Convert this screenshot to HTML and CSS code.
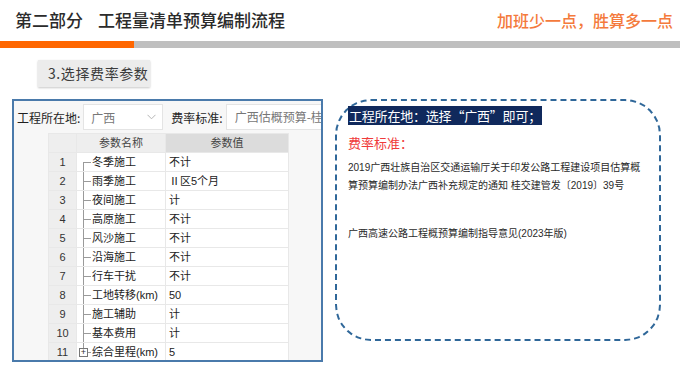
FILE: index.html
```html
<!DOCTYPE html>
<html lang="zh-CN">
<head>
    <meta charset="UTF-8">
    <title>工程量清单预算编制流程</title>
    <link rel="stylesheet" href="styles.css">
</head>
<body>
    <div class="header">
        <h1 class="title"><span class="part">第二部分</span>工程量清单预算编制流程</h1>
        <div class="slogan">加班少一点，胜算多一点</div>
    </div>
    <div class="bar">
        <div class="bar-orange"></div>
        <div class="bar-grey"></div>
    </div>

    <div class="main">
        <div class="left-col">
            <div class="step-tag">3.选择费率参数</div>

            <div class="panel">
                <div class="toolbar">
                    <span class="tb-label">工程所在地:</span>
                    <div class="select">
                        <span>广西</span>
                        <svg class="chev" width="9" height="6" viewBox="0 0 9 6"><path d="M0.5 0.8 L4.5 4.8 L8.5 0.8" fill="none" stroke="#b5b5b5" stroke-width="1"/></svg>
                    </div>
                    <span class="tb-label">费率标准:</span>
                    <div class="input">广西估概预算-桂交</div>
                </div>

                <table class="grid">
                    <thead>
                        <tr>
                            <th class="num"></th>
                            <th class="name-h">参数名称</th>
                            <th class="val-h">参数值</th>
                        </tr>
                    </thead>
                    <tbody>
                        <tr><td class="num">1</td><td class="name first">冬季施工</td><td>不计</td></tr>
                        <tr><td class="num">2</td><td class="name">雨季施工</td><td>Ⅱ区5个月</td></tr>
                        <tr><td class="num">3</td><td class="name">夜间施工</td><td>计</td></tr>
                        <tr><td class="num">4</td><td class="name">高原施工</td><td>不计</td></tr>
                        <tr><td class="num">5</td><td class="name">风沙施工</td><td>不计</td></tr>
                        <tr><td class="num">6</td><td class="name">沿海施工</td><td>不计</td></tr>
                        <tr><td class="num">7</td><td class="name">行车干扰</td><td>不计</td></tr>
                        <tr><td class="num">8</td><td class="name">工地转移(km)</td><td>50</td></tr>
                        <tr><td class="num">9</td><td class="name">施工辅助</td><td>计</td></tr>
                        <tr><td class="num">10</td><td class="name">基本费用</td><td>计</td></tr>
                        <tr><td class="num">11</td><td class="name last"><span class="plus">+</span>综合里程(km)</td><td>5</td></tr>
                    </tbody>
                </table>
            </div>
        </div>

        <div class="note-box">
            <p class="note-hl"><span>工程所在地：选择“广西”即可；</span></p>
            <p class="note-red">费率标准：</p>
            <p class="note-text">2019广西壮族自治区交通运输厅关于印发公路工程建设项目估算概算预算编制办法广西补充规定的通知 桂交建管发〔2019〕39号</p>
            <p class="note-text note-gap">广西高速公路工程概预算编制指导意见(2023年版)</p>
        </div>
    </div>
</body>
</html>
```

FILE: styles.css
```css
body {
    margin: 0;
    width: 680px;
    height: 377px;
    overflow: hidden;
    background: #ffffff;
    font-family: "Liberation Sans", "Noto Sans CJK SC", sans-serif;
    color: #333;
}

.header {
    display: flex;
    justify-content: space-between;
    align-items: flex-start;
    height: 41px;
    padding: 0 7px 0 15px;
}
.title {
    margin: 9px 0 0 0;
    font-family: "Noto Sans CJK SC", sans-serif;
    font-size: 17px;
    font-weight: 500;
    line-height: 22px;
    color: #2b2b2b;
}
.part {
    margin-right: 15px;
}
.slogan {
    margin-top: 10px;
    font-family: "Noto Sans CJK SC", sans-serif;
    font-size: 16px;
    font-weight: 500;
    line-height: 20px;
    color: #f47a3c;
}

.bar {
    display: flex;
    height: 7px;
}
.bar-orange {
    width: 134px;
    background: #ff6600;
}
.bar-grey {
    flex: 1;
    background: #bfbfbf;
}

.main {
    display: flex;
    gap: 12px;
    padding-left: 12px;
}
.left-col {
    width: 311px;
}

.step-tag {
    width: 112px;
    height: 27px;
    margin: 12px 0 0 26px;
    padding-left: 10px;
    box-sizing: border-box;
    background: #ececec;
    box-shadow: 0 1px 2px #c8c8c8;
    font-family: "Noto Sans CJK SC", sans-serif;
    font-size: 14px;
    line-height: 27px;
    letter-spacing: 0.6px;
    color: #3c3c3c;
}

.panel {
    margin-top: 12px;
    height: 263px;
    box-sizing: border-box;
    border: 2px solid #4a7aab;
    background: #f7f7f7;
    overflow: hidden;
}

.toolbar {
    display: flex;
    align-items: center;
    height: 32px;
    padding-left: 3px;
    font-size: 12px;
    color: #1f1f1f;
    white-space: nowrap;
    overflow: hidden;
}
.tb-label {
    flex: none;
    font-family: "Noto Sans CJK SC", sans-serif;
}
.select {
    flex: none;
    display: flex;
    align-items: center;
    justify-content: space-between;
    width: 80px;
    height: 26px;
    box-sizing: border-box;
    margin: 0 8px 0 3px;
    padding: 0 6px 0 7px;
    background: #fff;
    border: 1px solid #e4e4e4;
    color: #777;
    font-family: "Noto Sans CJK SC", sans-serif;
}
.input {
    flex: 1;
    min-width: 0;
    height: 26px;
    box-sizing: border-box;
    margin-left: 3px;
    padding: 0 0 0 8px;
    background: #fff;
    border: 1px solid #e4e4e4;
    border-right: none;
    color: #777;
    line-height: 24px;
    overflow: hidden;
    font-family: "Noto Sans CJK SC", sans-serif;
}

.grid {
    margin-left: 34px;
    border-collapse: collapse;
    font-size: 11px;
    color: #222;
}
.grid th,
.grid td {
    height: 19px;
    padding: 0;
    box-sizing: border-box;
    border: 1px solid #e8e8e8;
    font-weight: normal;
    line-height: 17px;
    white-space: nowrap;
}
.grid th {
    color: #444;
}
.grid td {
    background: #fff;
    padding-left: 3px;
}
.grid .num {
    width: 28px;
    background: #eeeeee;
    text-align: center;
    padding-left: 0;
    color: #333;
}
.name-h {
    width: 89px;
    background: #eeeeee;
}
.val-h {
    width: 123px;
    background: #dcdcdc;
}

.grid td.name {
    padding-left: 15px;
    background-color: #fff;
    background-image: linear-gradient(#9a9a9a, #9a9a9a), linear-gradient(#9a9a9a, #9a9a9a);
    background-repeat: no-repeat;
    background-size: 1px 100%, 8px 1px;
    background-position: 6px 0, 6px 9px;
}
.grid td.name.first {
    background-size: 1px 50%, 8px 1px;
    background-position: 6px 100%, 6px 9px;
}
.grid td.name.last {
    position: relative;
    background-size: 1px 50%, 8px 1px;
    background-position: 6px 0, 6px 9px;
}
.plus {
    position: absolute;
    left: 2px;
    top: 5px;
    width: 7px;
    height: 7px;
    border: 1px solid #777;
    background: #fff;
    font-size: 9px;
    line-height: 7px;
    text-align: center;
    color: #333;
}

.note-box {
    width: 326px;
    height: 242px;
    margin-top: 51px;
    box-sizing: border-box;
    border: 2px dashed #2f6799;
    border-radius: 36px;
    padding: 6px 10px 0 11px;
    font-family: "Liberation Sans", "Noto Sans CJK SC", sans-serif;
}
.note-box p {
    margin: 0;
}
.note-hl {
    font-family: "Noto Sans CJK SC", sans-serif;
    font-size: 13px;
    line-height: 17px;
}
.note-hl span {
    background: #10295c;
    color: #ffffff;
    padding: 0 1px;
    letter-spacing: -0.2px;
}
.note-red {
    margin-top: 10px !important;
    font-family: "Noto Sans CJK SC", sans-serif;
    font-size: 13px;
    line-height: 17px;
    color: #f03b3b;
}
.note-text {
    margin-top: 8px !important;
    font-size: 10px;
    line-height: 18px;
    color: #2a2a2a;
}
.note-gap {
    margin-top: 30px !important;
}
```
